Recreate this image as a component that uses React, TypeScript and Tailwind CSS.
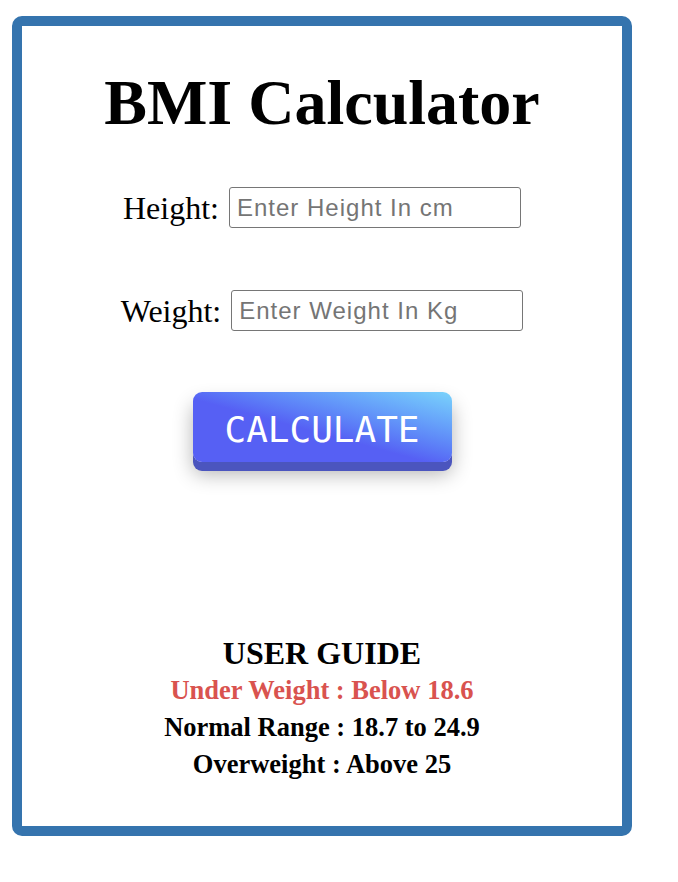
import React, { useState } from "react";

export default function App() {
  const [height, setHeight] = useState("");
  const [weight, setWeight] = useState("");

  return (
    <div className="min-h-[882px] bg-white pl-[12px] pt-[16px]">
      <div className="flex h-[820px] w-[620px] flex-col items-center rounded-[10px] border-[10px] border-[#3574ae] bg-white font-['Liberation_Serif',serif] text-black">
        {/* Title */}
        <h1 className="mt-[45px] text-[64px] font-bold leading-none">
          BMI Calculator
        </h1>

        {/* Inputs */}
        <div className="mt-[52px] flex h-[41px] items-center gap-[10px]">
          <label className="text-[32px] leading-none">Height:</label>
          <input
            value={height}
            onChange={(e) => setHeight(e.target.value)}
            placeholder="Enter Height In cm"
            className="h-[41px] w-[292px] rounded-[3px] border border-[#767676] px-[7px] font-['Liberation_Sans',sans-serif] text-[24px] tracking-[1px] placeholder:text-[#757575]"
          />
        </div>

        <div className="mt-[62px] flex h-[41px] items-center gap-[10px]">
          <label className="text-[32px] leading-none">Weight:</label>
          <input
            value={weight}
            onChange={(e) => setWeight(e.target.value)}
            placeholder="Enter Weight In Kg"
            className="h-[41px] w-[292px] rounded-[3px] border border-[#767676] px-[7px] font-['Liberation_Sans',sans-serif] text-[24px] tracking-[1px] placeholder:text-[#757575]"
          />
        </div>

        {/* Button */}
        <button className="mt-[61px] flex h-[70px] w-[259px] items-center justify-center rounded-[9px] bg-linear-to-tr from-[#5660f4] from-45% to-[#7ad3fb] pt-[6px] font-['DejaVu_Sans_Mono',monospace] text-[36px] text-white shadow-[0_9px_0_#4b55be,0_12px_20px_rgba(0,0,0,0.3)]">
          CALCULATE
        </button>

        {/* User guide */}
        <div className="mt-[175px] flex flex-col items-center font-bold">
          <h2 className="text-[32px] leading-none">USER GUIDE</h2>
          <p className="mt-[3px] text-[26.5px] leading-[37px] text-[#d9534f]">
            Under Weight : Below 18.6
          </p>
          <p className="text-[26.5px] leading-[37px]">Normal Range : 18.7 to 24.9</p>
          <p className="text-[26.5px] leading-[37px]">Overweight : Above 25</p>
        </div>
      </div>
    </div>
  );
}
